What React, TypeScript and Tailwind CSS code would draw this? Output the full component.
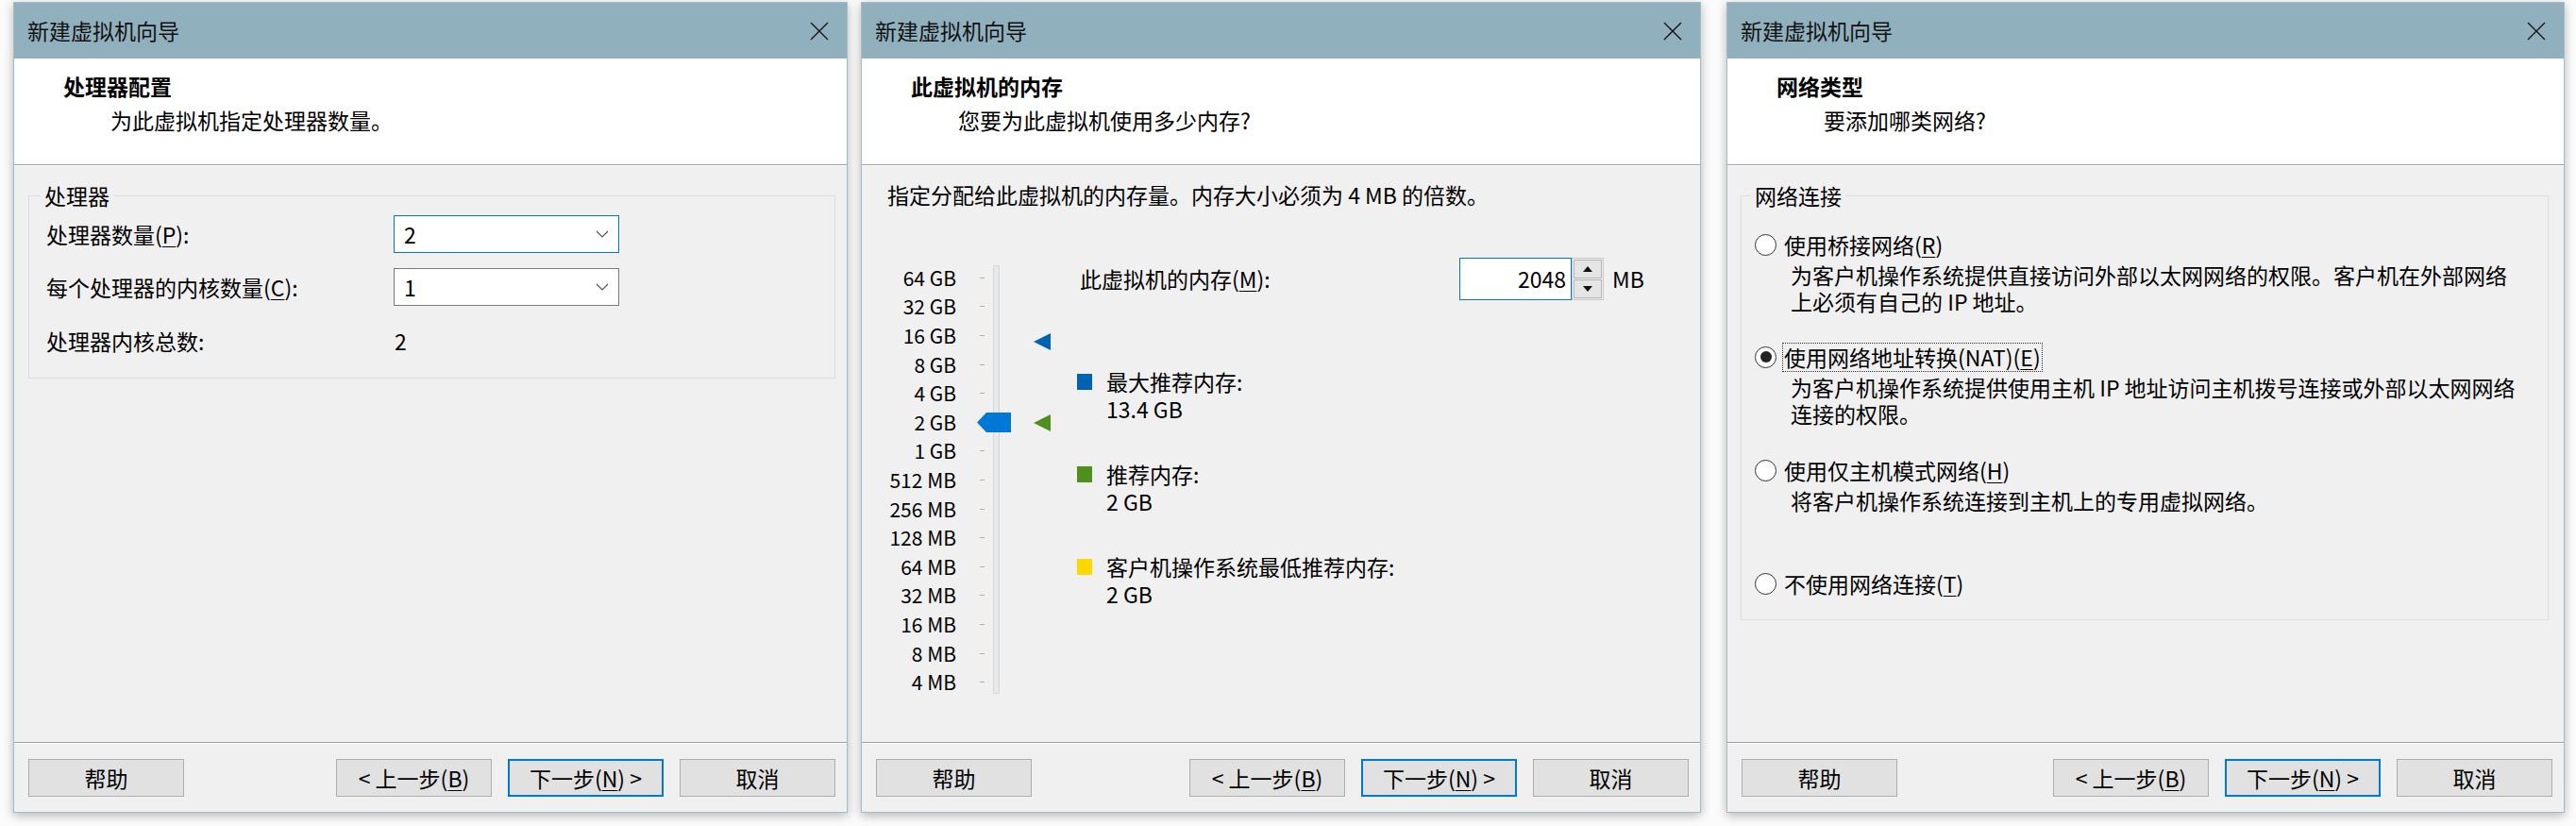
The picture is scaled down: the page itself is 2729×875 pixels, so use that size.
import React from "react";

const FONT = { fontFamily: '"Noto Sans CJK SC", "Noto Sans", sans-serif' };

function CloseX() {
  return (
    <svg width="22" height="22" viewBox="0 0 22 22" className="block">
      <line x1="2" y1="2" x2="20" y2="20" stroke="#111" strokeWidth="1.3" />
      <line x1="20" y1="2" x2="2" y2="20" stroke="#111" strokeWidth="1.3" />
    </svg>
  );
}

function U({ children }: { children: React.ReactNode }) {
  return <span className="underline underline-offset-[3px] decoration-1">{children}</span>;
}

function Btn({ children, primary }: { children: React.ReactNode; primary?: boolean }) {
  return (
    <div
      className={
        "w-[165px] h-[40px] flex items-center justify-center bg-[#e1e1e1] text-[23px] leading-none text-black " +
        (primary ? "border-2 border-[#0078d7]" : "border border-[#adadad]")
      }
    >
      {children}
    </div>
  );
}

function Dialog({
  width,
  title,
  subtitle,
  children,
}: {
  width: number;
  title: string;
  subtitle: string;
  children: React.ReactNode;
}) {
  return (
    <div
      className="h-[859px] flex flex-col bg-[#f0f0f0] border border-[#a3bcc6] shadow-[0_3px_10px_rgba(0,0,0,0.28)] shrink-0"
      style={{ width }}
    >
      <div className="h-[59px] bg-[#90b0bd] flex items-center justify-between pl-[14px] pr-[18px] shrink-0">
        <span className="text-[23px] text-[#111]">新建虚拟机向导</span>
        <CloseX />
      </div>
      <div className="h-[112px] bg-white pt-[14px] shrink-0">
        <div className="pl-[52px] text-[23px] leading-[30px] font-bold text-black">{title}</div>
        <div className="pl-[102px] mt-[6px] text-[23px] leading-[30px] text-black">{subtitle}</div>
      </div>
      <div className="h-[2px] border-t border-[#a0a0a0] bg-white shrink-0" />
      <div className="flex-1 min-h-0">{children}</div>
      <div className="h-[2px] border-t border-[#a0a0a0] bg-white shrink-0" />
      <div className="h-[72px] shrink-0 flex items-start justify-between pt-[16px] pl-[15px] pr-[12px]">
        <Btn>帮助</Btn>
        <div className="flex gap-[17px]">
          <Btn>
            &lt; 上一步(<U>B</U>)
          </Btn>
          <Btn primary>
            下一步(<U>N</U>) &gt;
          </Btn>
          <Btn>取消</Btn>
        </div>
      </div>
    </div>
  );
}

function Chevron() {
  return (
    <svg width="14" height="9" viewBox="0 0 14 9" className="block">
      <polyline points="1,1 7,7 13,1" fill="none" stroke="#555" strokeWidth="1.2" />
    </svg>
  );
}

function Combo({ value, focused }: { value: string; focused?: boolean }) {
  return (
    <div
      className={
        "w-[239px] h-[40px] bg-white flex items-center justify-between pl-[10px] pr-[10px] " +
        (focused ? "border border-[#0078d7]" : "border border-[#7a7a7a]")
      }
    >
      <span className="text-[23px] leading-none">{value}</span>
      <Chevron />
    </div>
  );
}

function Dialog1() {
  return (
    <Dialog width={884} title="处理器配置" subtitle="为此虚拟机指定处理器数量。">
      <div className="pt-[16px] pl-[15px] pr-[12px]">
        <fieldset className="border border-[#d5dfe5] px-[18px] pb-[19px]">
          <legend className="ml-[-6px] px-[4px] text-[23px] leading-[30px]">处理器</legend>
          <div className="mt-[6px] flex flex-col gap-[16px]">
            <div className="h-[40px] flex items-center">
              <span className="w-[368px] text-[23px]">
                处理器数量(<U>P</U>):
              </span>
              <Combo value="2" focused />
            </div>
            <div className="h-[40px] flex items-center">
              <span className="w-[368px] text-[23px]">
                每个处理器的内核数量(<U>C</U>):
              </span>
              <Combo value="1" />
            </div>
            <div className="h-[40px] flex items-center mt-[1px]">
              <span className="w-[368px] text-[23px]">处理器内核总数:</span>
              <span className="text-[23px] pl-[1px]">2</span>
            </div>
          </div>
        </fieldset>
      </div>
    </Dialog>
  );
}

const SIZES = [
  "64 GB",
  "32 GB",
  "16 GB",
  "8 GB",
  "4 GB",
  "2 GB",
  "1 GB",
  "512 MB",
  "256 MB",
  "128 MB",
  "64 MB",
  "32 MB",
  "16 MB",
  "8 MB",
  "4 MB",
];

function LegendItem({ color, label, value }: { color: string; label: string; value: string }) {
  return (
    <div className="flex">
      <div className="w-[31px] h-[29px] flex items-center">
        <div className="w-[16px] h-[17px]" style={{ background: color }} />
      </div>
      <div className="text-[23px] leading-[29px]">
        <div>{label}</div>
        <div>{value}</div>
      </div>
    </div>
  );
}

function Dialog2() {
  return (
    <Dialog width={890} title="此虚拟机的内存" subtitle="您要为此虚拟机使用多少内存?">
      <div className="pt-[15px] pl-[27px] pr-[12px]">
        <div className="text-[23px] leading-[30px]">
          指定分配给此虚拟机的内存量。内存大小必须为 4 MB 的倍数。
        </div>
        <div className="mt-[52px] flex items-start">
          {/* slider */}
          <div className="relative flex pt-[6px]">
            <div className="w-[73px] flex flex-col items-end">
              {SIZES.map((s) => (
                <div key={s} className="h-[30.6px] flex items-center text-[21px] leading-none whitespace-nowrap">
                  {s}
                </div>
              ))}
            </div>
            <div className="w-[30px] flex flex-col items-end pl-[12px]">
              {SIZES.map((s) => (
                <div key={s} className="h-[30.6px] flex items-center">
                  <div className="w-[5px] h-[1px] bg-[#b0b0b0]" />
                </div>
              ))}
            </div>
            <div className="w-[90px] relative">
              <div className="absolute left-[9px] top-[2px] w-[7px] h-[454px] bg-[#e7eaec] border border-[#d6d6d6] rounded-[1px]" />
              <svg className="absolute left-[-8px] top-[158px]" width="36" height="21" viewBox="0 0 36 21">
                <polygon points="0,10.5 10,0 36,0 36,21 10,21" fill="#0078d7" />
              </svg>
              <svg className="absolute left-[52px] top-[74px]" width="18" height="18" viewBox="0 0 18 18">
                <polygon points="0,9 18,0 18,18" fill="#0063b1" />
              </svg>
              <svg className="absolute left-[52px] top-[160px]" width="18" height="18" viewBox="0 0 18 18">
                <polygon points="0,9 18,0 18,18" fill="#4e8f1d" />
              </svg>
            </div>
          </div>
          {/* right side */}
          <div className="flex-1 flex flex-col pl-[8px]">
            <div className="h-[45px] flex items-center">
              <span className="w-[405px] text-[23px] pl-[3px]">
                此虚拟机的内存(<U>M</U>):
              </span>
              <div className="flex h-[45px]">
                <div className="w-[119px] h-[45px] bg-white border border-[#0078d7] flex items-center justify-end pr-[5px] text-[23px]">
                  2048
                </div>
                <div className="w-[34px] h-[45px] flex flex-col border border-[#c8c8c8] bg-[#f0f0f0] p-[1px] gap-[1px]">
                  <div className="flex-1 bg-[#e5e5e5] border border-[#b5b5b5] flex items-center justify-center">
                    <svg width="10" height="6" viewBox="0 0 10 6">
                      <polygon points="0,6 5,0 10,6" fill="#111" />
                    </svg>
                  </div>
                  <div className="flex-1 bg-[#e5e5e5] border border-[#b5b5b5] flex items-center justify-center">
                    <svg width="10" height="6" viewBox="0 0 10 6">
                      <polygon points="0,0 10,0 5,6" fill="#111" />
                    </svg>
                  </div>
                </div>
              </div>
              <span className="ml-[9px] text-[23px]">MB</span>
            </div>
            <div className="mt-[72px] flex flex-col gap-[40px]">
              <LegendItem color="#0063b1" label="最大推荐内存:" value="13.4 GB" />
              <LegendItem color="#4e8f1d" label="推荐内存:" value="2 GB" />
              <LegendItem color="#ffd800" label="客户机操作系统最低推荐内存:" value="2 GB" />
            </div>
          </div>
        </div>
      </div>
    </Dialog>
  );
}

function Radio({ checked }: { checked?: boolean }) {
  return (
    <div className="w-[23px] h-[23px] rounded-full border-[1.5px] border-[#333] bg-white flex items-center justify-center shrink-0">
      {checked && <div className="w-[12px] h-[12px] rounded-full bg-[#222]" />}
    </div>
  );
}

function Dialog3() {
  return (
    <Dialog width={888} title="网络类型" subtitle="要添加哪类网络?">
      <div className="pt-[16px] pl-[14px] pr-[16px]">
        <fieldset className="border border-[#d5dfe5] pl-[14px] pr-[10px] pb-[22px]">
          <legend className="ml-[-4px] px-[4px] text-[23px] leading-[30px]">网络连接</legend>
          <div className="mt-[21px]">
            <div className="h-[32px] flex items-center gap-[8px]">
              <Radio />
              <span className="text-[23px]">
                使用桥接网络(<U>R</U>)
              </span>
            </div>
            <div className="mt-[2px] pl-[38px] text-[23px] leading-[28px]">
              为客户机操作系统提供直接访问外部以太网网络的权限。客户机在外部网络
              <br />
              上必须有自己的 IP 地址。
            </div>
          </div>
          <div className="mt-[29px]">
            <div className="h-[32px] flex items-center gap-[6px]">
              <Radio checked />
              <span className="text-[23px] leading-[29px] border border-dotted border-[#333] px-[1px]">
                使用网络地址转换(NAT)(<U>E</U>)
              </span>
            </div>
            <div className="mt-[2px] pl-[38px] text-[23px] leading-[28px]">
              为客户机操作系统提供使用主机 IP 地址访问主机拨号连接或外部以太网网络
              <br />
              连接的权限。
            </div>
          </div>
          <div className="mt-[30px]">
            <div className="h-[32px] flex items-center gap-[8px]">
              <Radio />
              <span className="text-[23px]">
                使用仅主机模式网络(<U>H</U>)
              </span>
            </div>
            <div className="mt-[2px] pl-[38px] text-[23px] leading-[28px]">
              将客户机操作系统连接到主机上的专用虚拟网络。
            </div>
          </div>
          <div className="mt-[58px]">
            <div className="h-[32px] flex items-center gap-[8px]">
              <Radio />
              <span className="text-[23px]">
                不使用网络连接(<U>T</U>)
              </span>
            </div>
          </div>
        </fieldset>
      </div>
    </Dialog>
  );
}

export default function App() {
  return (
    <div className="w-[2729px] h-[875px] bg-[#fbfbfb] overflow-hidden text-black" style={FONT}>
      <div className="flex items-start pt-[2px] pl-[14px]">
        <Dialog1 />
        <div className="w-[14px] shrink-0" />
        <Dialog2 />
        <div className="w-[27px] shrink-0" />
        <Dialog3 />
      </div>
    </div>
  );
}
